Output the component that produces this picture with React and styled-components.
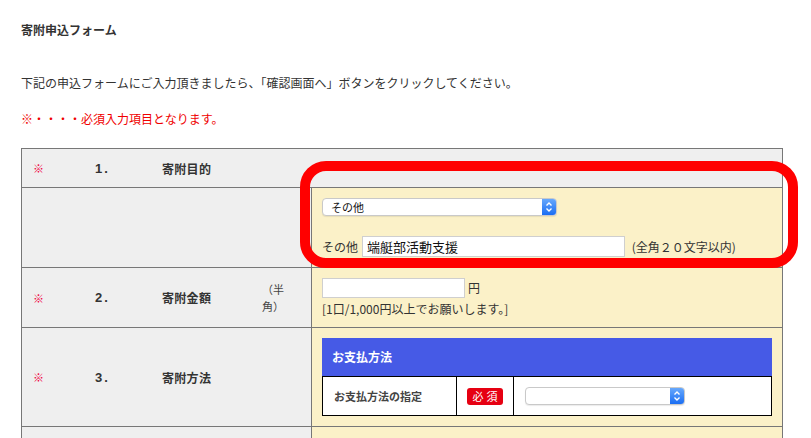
import React from "react";
import styled, { createGlobalStyle } from "styled-components";

const GlobalStyle = createGlobalStyle`
  html, body {
    margin: 0;
    padding: 0;
    background: #fff;
    overflow: hidden;
  }
  body {
    font-family: "Noto Sans CJK JP", "Noto Sans", sans-serif;
    color: #333;
  }
`;

const Page = styled.div`
  padding: 20px 0 0 21px;
  width: 762px;
`;

const Title = styled.h2`
  margin: 0;
  font-size: 12px;
  line-height: 20px;
  font-weight: 700;
  color: #333;
`;

const Lead = styled.p`
  margin: 33px 0 0;
  font-size: 12px;
  line-height: 20px;
  color: ${(p) => (p.$red ? "#f00000" : "#333")};
  & + & {
    margin-top: 16px;
  }
`;

const Table = styled.div`
  position: relative;
  margin-top: 19px;
  border: 1px solid #777;
  box-sizing: border-box;
  width: 762px;
`;

const Row = styled.div`
  display: grid;
  grid-template-columns: ${(p) => (p.$full ? "1fr" : "290px 1fr")};
  border-top: 1px solid #777;
  height: ${(p) => p.$h}px;
  &:first-child {
    border-top: 0;
  }
`;

const Label = styled.div`
  display: grid;
  grid-template-columns: 62px 67px 100px 23px;
  align-items: center;
  padding-left: 11px;
  background: #efefef;
  border-right: ${(p) => (p.$full ? "0" : "1px solid #777")};
`;

const Mark = styled.span`
  color: #f0003c;
  font-size: 11px;
`;

const Num = styled.span`
  font-family: "Liberation Sans", Arial, sans-serif;
  font-weight: 700;
  font-size: 13px;
  letter-spacing: 2px;
  color: #333;
`;

const Name = styled.span`
  font-size: 12px;
  font-weight: 700;
  color: #333;
  letter-spacing: 0.3px;
`;

const Note = styled.span`
  font-size: 11px;
  line-height: 17px;
  color: #444;
  word-break: break-all;
`;

const Field = styled.div`
  background: #fbf1c8;
  padding: ${(p) => p.$pad || "10px"};
  display: flex;
  flex-direction: column;
  align-items: flex-start;
  font-size: 12px;
  line-height: 18px;
  color: #333;
`;

const Select = styled.div`
  display: flex;
  width: ${(p) => p.$w}px;
  height: 18px;
  box-sizing: border-box;
  border: 1px solid #c9c9c9;
  border-radius: 4px;
  background: #fff;
  box-shadow: 0 1px 1px rgba(0, 0, 0, 0.08);
  overflow: hidden;
`;

const SelectText = styled.span`
  flex: 1;
  padding-left: 8px;
  font-size: 11px;
  line-height: 16px;
  color: #111;
`;

const SelectButton = styled.span`
  width: 14px;
  display: flex;
  align-items: center;
  justify-content: center;
  background: linear-gradient(#67a8fc, #1b6ef3);
`;

const Line = styled.div`
  display: flex;
  align-items: center;
  gap: ${(p) => p.$gap || 4}px;
  margin-top: ${(p) => p.$mt || 0}px;
`;

const TextInput = styled.div`
  width: ${(p) => p.$w}px;
  height: ${(p) => p.$h}px;
  box-sizing: border-box;
  border: 1px solid #cfcfcf;
  background: #fff;
  padding-left: 4px;
  font-size: 13px;
  line-height: ${(p) => p.$h - 2}px;
  color: #111;
`;

const Hint = styled.div`
  font-size: 12px;
  line-height: 18px;
  margin-top: 2px;
  color: #333;
`;

const PayBox = styled.div`
  width: 450px;
`;

const PayHead = styled.div`
  background: #465ae6;
  color: #fff;
  font-size: 12px;
  font-weight: 700;
  height: 38px;
  line-height: 38px;
  padding-left: 10px;
`;

const PayRow = styled.div`
  display: grid;
  grid-template-columns: 134px 57px 1fr;
  border: 1px solid #000;
  background: #fff;
  height: 40px;
  box-sizing: border-box;
`;

const PayCell = styled.div`
  display: flex;
  align-items: center;
  padding-left: ${(p) => p.$pl || 0}px;
  border-right: ${(p) => (p.$last ? "0" : "1px solid #000")};
  font-size: 11px;
  font-weight: 700;
  color: #444;
`;

const Badge = styled.span`
  display: inline-flex;
  align-items: center;
  justify-content: center;
  width: 36px;
  height: 17px;
  border-radius: 3px;
  background: #e60012;
  color: #fff;
  font-size: 11px;
  font-weight: 400;
  letter-spacing: 3px;
  text-indent: 3px;
`;

const Highlight = styled.div`
  position: absolute;
  left: 278px;
  top: 12px;
  width: 498px;
  height: 107px;
  box-sizing: border-box;
  border: 10px solid #ff0000;
  border-radius: 26px;
  pointer-events: none;
`;

function Arrows() {
  return (
    <svg width="8" height="12" viewBox="0 0 8 12">
      <path
        d="M1.5 4.5 L4 2 L6.5 4.5 M1.5 7.5 L4 10 L6.5 7.5"
        fill="none"
        stroke="#fff"
        strokeWidth="1.4"
      />
    </svg>
  );
}

function Dropdown({ width, value }) {
  return (
    <Select $w={width}>
      <SelectText>{value}</SelectText>
      <SelectButton>
        <Arrows />
      </SelectButton>
    </Select>
  );
}

export default function App() {
  return (
    <>
      <GlobalStyle />
      <Page>
        <Title>寄附申込フォーム</Title>
        <Lead>
          下記の申込フォームにご入力頂きましたら、「確認画面へ」ボタンをクリックしてください。
        </Lead>
        <Lead $red>※・・・・必須入力項目となります。</Lead>

        <Table>
          <Row $full $h={38}>
            <Label $full>
              <Mark>※</Mark>
              <Num>1.</Num>
              <Name>寄附目的</Name>
            </Label>
          </Row>
          <Row $h={79}>
            <Label />
            <Field $pad="10px 10px 0">
              <Dropdown width={235} value="その他" />
              <Line $mt={20}>
                <span>その他</span>
                <TextInput $w={263} $h={21}>
                  端艇部活動支援
                </TextInput>
                <span>&nbsp;(全角２０文字以内)</span>
              </Line>
            </Field>
          </Row>
          <Row $h={59}>
            <Label>
              <Mark>※</Mark>
              <Num>2.</Num>
              <Name>寄附金額</Name>
              <Note>（半角）</Note>
            </Label>
            <Field $pad="10px 10px 0">
              <Line $gap={3}>
                <TextInput $w={143} $h={20} />
                <span>円</span>
              </Line>
              <Hint>[1口/1,000円以上でお願いします。]</Hint>
            </Field>
          </Row>
          <Row $h={98}>
            <Label>
              <Mark>※</Mark>
              <Num>3.</Num>
              <Name>寄附方法</Name>
            </Label>
            <Field $pad="10px 10px 0">
              <PayBox>
                <PayHead>お支払方法</PayHead>
                <PayRow>
                  <PayCell $pl={11}>お支払方法の指定</PayCell>
                  <PayCell $pl={10}>
                    <Badge>必須</Badge>
                  </PayCell>
                  <PayCell $pl={11} $last>
                    <Dropdown width={160} value="" />
                  </PayCell>
                </PayRow>
              </PayBox>
            </Field>
          </Row>
          <Row $h={40}>
            <Label />
            <Field />
          </Row>
          <Highlight />
        </Table>
      </Page>
    </>
  );
}
